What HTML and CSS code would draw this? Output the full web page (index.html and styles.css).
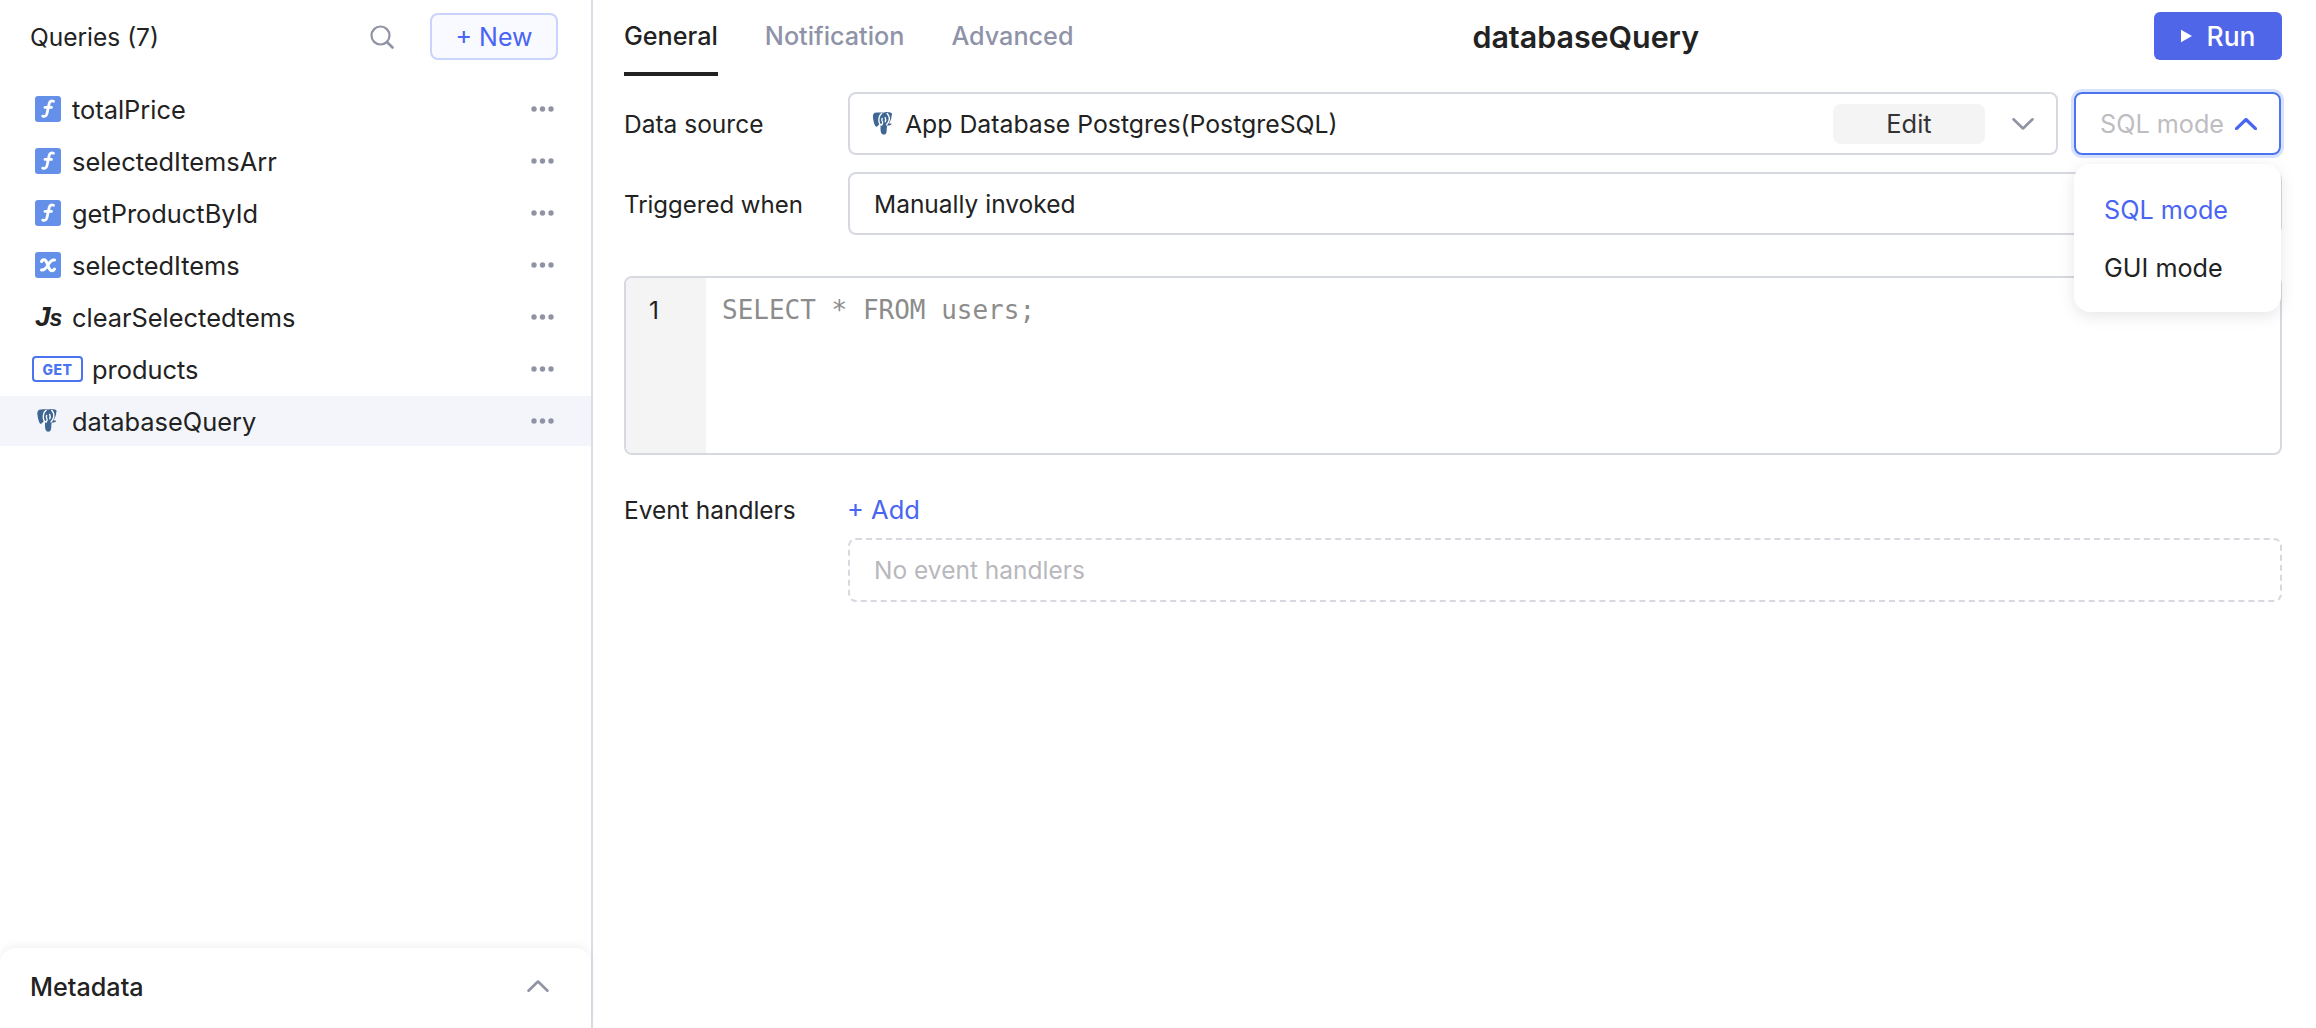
FILE: index.html
```html
<!DOCTYPE html>
<html lang="en">
<head>
<meta charset="utf-8">
<title>databaseQuery</title>
<link rel="stylesheet" href="styles.css">
</head>
<body>
<svg class="defs" width="0" height="0" aria-hidden="true">
  <symbol id="pg" viewBox="0 0 25 28">
    <path fill="#3f6592" d="M5 1.500C2 1.500.7 3.500 1 6.500c.3 3 1.300 8 2.600 9.800.8 1 1.800.8 2.800-.3L8 14.200c.5.3 1 .5 1.500.6-.2 1.500-.3 3-.2 5.500.1 3 1.200 5.200 3.200 5.200 2.400 0 3.300-1.600 3.400-4 .1-2 .2-4 .5-6 1.500.3 3.500 0 4.600-1 .6-.6.3-1-.5-.9-.8 0-1.400 0-2-.4 1.800-3 3-5.800 2.800-8.500C23.100 3 20.500 1.200 17.500 1.300c-1.700-.4-3.400-.2-5 .4C10.800 1.200 8 1.500 5 1.500z"/>
    <path fill="none" stroke="#fff" stroke-width="1.500" stroke-linecap="round" d="M10.500 2.500C8 4.500 7 8.500 7.800 12.500c.3 1.400 1 2.300 2.500 2.500M11 8c-.6 1.500-.4 2.700.4 3.700.7 1-.4 2.500-.9 3.500M16.500 2.500c2.500 2.800 3 6.300 1.300 9.500-.5 1-1.100 1.800-2 2.700M14.300 7c.7 1.500.8 3 .1 4.500"/>
  </symbol>
  <symbol id="dots" viewBox="0 0 23 6">
    <circle cx="3" cy="3" r="2.700"/><circle cx="11.500" cy="3" r="2.700"/><circle cx="20" cy="3" r="2.700"/>
  </symbol>
  <symbol id="chev-up" viewBox="0 0 22 12">
    <path fill="none" stroke="currentColor" stroke-linecap="round" stroke-linejoin="round" d="M1.500 10.700 11 1.500 20.500 10.700"/>
  </symbol>
  <symbol id="chev-down" viewBox="0 0 22 12">
    <path fill="none" stroke="currentColor" stroke-linecap="round" stroke-linejoin="round" d="M1.500 1.300 11 10.500 20.500 1.300"/>
  </symbol>
  <symbol id="fn" viewBox="0 0 26 26">
    <rect width="26" height="26" rx="3" fill="#6490ea"/>
    <path fill="none" stroke="#fff" stroke-width="2.800" stroke-linecap="round" d="M18.500 5.200c-2.300-.8-3.800 0-4.300 2.300l-2.200 10c-.5 2.300-2 3.200-4.300 2.600M10 11.400h6.500"/>
  </symbol>
  <symbol id="var" viewBox="0 0 26 26">
    <rect width="26" height="26" rx="3" fill="#6490ea"/>
    <path fill="none" stroke="#fff" stroke-width="3" stroke-linecap="round" d="M6.500 9.500c1-2 3-2.300 4.300-.8 1.800 2.200 2.500 7.200 4.400 9.200 1.300 1.300 3.300 1 4.300-.9M19.500 8c-3-.5-4.500 1.500-6.500 5-2 3.500-3.500 5.500-6.500 5"/>
  </symbol>
</svg>
<div class="app">
  <aside class="sidebar">
    <header class="side-head">
      <span class="side-title">Queries (7)</span>
      <svg class="search" viewBox="0 0 24 24" aria-hidden="true"><circle cx="10.500" cy="10.500" r="9" fill="none" stroke="#8f93a3" stroke-width="2.200"/><path d="M17 17l5.500 5.500" stroke="#8f93a3" stroke-width="2.600" stroke-linecap="round"/></svg>
      <button class="new-btn">+ New</button>
    </header>
    <ul class="list">
      <li class="row"><svg class="ico"><use href="#fn"/></svg><span class="name">totalPrice</span><svg class="dots"><use href="#dots"/></svg></li>
      <li class="row"><svg class="ico"><use href="#fn"/></svg><span class="name">selectedItemsArr</span><svg class="dots"><use href="#dots"/></svg></li>
      <li class="row"><svg class="ico"><use href="#fn"/></svg><span class="name">getProductById</span><svg class="dots"><use href="#dots"/></svg></li>
      <li class="row"><svg class="ico"><use href="#var"/></svg><span class="name">selectedItems</span><svg class="dots"><use href="#dots"/></svg></li>
      <li class="row"><span class="ico-js">J<span class="ico-js-s">s</span></span><span class="name">clearSelectedtems</span><svg class="dots"><use href="#dots"/></svg></li>
      <li class="row row-get"><span class="ico-get">GET</span><span class="name">products</span><svg class="dots"><use href="#dots"/></svg></li>
      <li class="row row-active"><svg class="ico"><use href="#pg"/></svg><span class="name">databaseQuery</span><svg class="dots"><use href="#dots"/></svg></li>
    </ul>
    <section class="meta">
      <span class="meta-title">Metadata</span>
      <svg class="chev chev-gray"><use href="#chev-up"/></svg>
    </section>
  </aside>
  <main class="main">
    <header class="topbar">
      <nav class="tabs">
        <span class="tab tab-active">General</span>
        <span class="tab">Notification</span>
        <span class="tab">Advanced</span>
      </nav>
      <h1 class="title">databaseQuery</h1>
      <button class="run-btn"><svg class="play" viewBox="0 0 11 14" aria-hidden="true"><path d="M0 0.800 11 7 0 13.200z" fill="#fff"/></svg>Run</button>
    </header>
    <div class="form-row">
      <label class="label">Data source</label>
      <div class="control source">
        <svg class="source-pg"><use href="#pg"/></svg>
        <span class="source-name">App Database Postgres(PostgreSQL)</span>
        <span class="edit">Edit</span>
        <svg class="chev chev-gray"><use href="#chev-down"/></svg>
      </div>
      <div class="mode-wrap">
        <div class="control mode">
          <span class="mode-text">SQL mode</span>
          <svg class="chev chev-blue"><use href="#chev-up"/></svg>
        </div>
        <div class="menu">
          <div class="menu-item menu-on">SQL mode</div>
          <div class="menu-item">GUI mode</div>
        </div>
      </div>
    </div>
    <div class="form-row row-trigger">
      <label class="label label-trigger">Triggered when</label>
      <div class="control trigger">Manually invoked</div>
    </div>
    <div class="editor">
      <div class="gutter">1</div>
      <code class="code">SELECT * FROM users;</code>
    </div>
    <div class="form-row row-events">
      <label class="label label-events">Event handlers</label>
      <div class="events">
        <span class="add">+ Add</span>
        <div class="empty">No event handlers</div>
      </div>
    </div>
  </main>
</div>
</body>
</html>
```

FILE: styles.css
```css
* { box-sizing: border-box; }
html, body { margin: 0; height: 100%; }
body {
  font-family: Inter, "Liberation Sans", sans-serif;
  font-size: 24.5px;
  color: #222222;
  background: #ffffff;
  overflow: hidden;
}
.defs { position: absolute; }
button { font: inherit; cursor: pointer; }

.app { display: flex; height: 1028px; }

.sidebar {
  width: 593px;
  flex: none;
  display: flex;
  flex-direction: column;
  border-right: 2px solid #dadde7;
}
.side-head {
  display: flex;
  align-items: center;
  height: 60px;
  margin-top: 13px;
  padding: 0 33px 13px 30px;
}
.side-title { flex: 1; }
.search { width: 24px; height: 24px; margin-right: 36px; }
.new-btn {
  width: 128px;
  height: 47px;
  border: 2px solid #c9d3fb;
  border-radius: 8px;
  background: #f8faff;
  color: #4965f2;
  font-size: 25px;
  padding: 0;
}

.list {
  list-style: none;
  margin: 11px 0 0;
  padding: 0;
  flex: 1;
  display: flex;
  flex-direction: column;
  gap: 2px;
}
.row {
  display: flex;
  align-items: center;
  height: 50px;
  padding: 0 37px 0 35px;
}
.row-active { background: #f3f5fa; }
.name { flex: 1; margin-left: 11px; font-size: 25.4px; }
.row-get .name { margin-left: 8px; }
.dots { width: 23px; height: 6px; fill: #8f93a3; }

.ico { width: 26px; height: 26px; flex: none; }
.ico-js {
  width: 26px;
  flex: none;
  font-family: "Liberation Sans", sans-serif;
  font-weight: 700;
  font-style: italic;
  font-size: 28px;
  line-height: 1;
  letter-spacing: -1px;
  white-space: nowrap;
  color: #222222;
}
.ico-js-s { font-size: 23px; }
.ico-get {
  width: 51px;
  height: 26px;
  flex: none;
  margin-left: -3px;
  margin-right: 1px;
  border: 2px solid #4a74f0;
  border-radius: 4px;
  color: #4a74f0;
  font-weight: 800;
  font-size: 14px;
  letter-spacing: 0.5px;
  display: flex;
  align-items: center;
  justify-content: center;
}

.meta {
  height: 80px;
  display: flex;
  align-items: center;
  justify-content: space-between;
  padding: 0 42px 4px 30px;
  border-radius: 16px 16px 0 0;
  box-shadow: 0 -3px 8px rgba(0, 0, 0, 0.05);
}
.meta-title { font-weight: 500; font-size: 25.2px; padding-top: 2px; }

.chev { width: 22px; height: 12px; flex: none; stroke-width: 2.6px; }
.chev-gray { color: #8f93a3; }
.chev-blue { color: #4965f2; stroke-width: 3.2px; }

.main {
  flex: 1;
  min-width: 0;
  position: relative;
  padding: 0 34px 0 31px;
}
.topbar {
  display: flex;
  align-items: flex-start;
  height: 76px;
}
.tabs { display: flex; gap: 47px; height: 76px; font-size: 25.2px; }
.tab {
  height: 76px;
  line-height: 73px;
  color: #8f93a8;
  font-weight: 500;
}
.tab-active {
  color: #222222;
  border-bottom: 4px solid #222222;
}
.title {
  flex: 1;
  margin: 0;
  padding-right: 56px;
  text-align: center;
  font-size: 30.4px;
  font-weight: 600;
  line-height: 75px;
}
.run-btn {
  margin-top: 12px;
  width: 128px;
  height: 48px;
  border: 0;
  border-radius: 6px;
  background: #5066e8;
  color: #ffffff;
  font-size: 26.4px;
  font-weight: 500;
  display: flex;
  align-items: center;
  justify-content: center;
  gap: 15px;
  padding: 0;
}
.play { width: 11px; height: 14px; }

.form-row { display: flex; align-items: center; gap: 0; margin-top: 16px; }
.row-trigger { margin-top: 17px; }
.label { width: 224px; flex: none; padding-top: 1px; }
.label-trigger { font-size: 24px; }
.control {
  height: 63px;
  border: 2px solid #d7d9e0;
  border-radius: 8px;
  display: flex;
  align-items: center;
}
.source { width: 1210px; padding: 0 22px; }
.source-pg { width: 23px; height: 26px; flex: none; }
.source-name { flex: 1; margin-left: 10px; font-size: 24.8px; padding-top: 1px; }
.edit {
  width: 152px;
  height: 40px;
  border-radius: 8px;
  background: #f4f4f5;
  color: #333333;
  font-size: 25.4px;
  display: flex;
  align-items: center;
  justify-content: center;
  margin-right: 27px;
}
.mode-wrap { position: relative; margin-left: 16px; }
.mode {
  width: 207px;
  padding: 0 22px 0 24px;
  border-color: #4a74f0;
  box-shadow: 0 0 0 3px #d8e2fc;
}
.mode-text { flex: 1; color: #bdbdc2; font-size: 25.2px; }
.menu {
  position: absolute;
  z-index: 2;
  top: 72px;
  left: 0;
  width: 207px;
  height: 148px;
  padding-top: 17px;
  border-radius: 16px;
  background: #ffffff;
  box-shadow: 0 4px 16px rgba(0, 0, 0, 0.1);
}
.menu-item { height: 58px; line-height: 58px; padding-left: 30px; font-size: 25.2px; }
.menu-on { color: #4965f2; }
.trigger { flex: 1; padding: 1px 25px 0 24px; }

.editor {
  display: flex;
  height: 179px;
  margin-top: 41px;
  border: 2px solid #d7d9e0;
  border-radius: 8px;
  overflow: hidden;
}
.gutter {
  width: 80px;
  flex: none;
  background: #f4f4f5;
  padding: 16px 0 0 23px;
  line-height: 32px;
}
.code {
  padding: 16px 0 0 16px;
  font-family: "DejaVu Sans Mono", "Liberation Mono", monospace;
  font-size: 26px;
  line-height: 32px;
  color: #8c8c8c;
}

.row-events { align-items: flex-start; margin-top: 34px; }
.label-events { line-height: 42px; padding-top: 0; }
.events { flex: 1; }
.add { display: block; line-height: 42px; font-size: 25.5px; color: #4965f2; margin-left: -1px; }
.empty {
  height: 64px;
  margin-top: 7px;
  border: 2px dashed #d7d9e0;
  border-radius: 8px;
  padding-left: 24px;
  line-height: 60px;
  color: #b8b8bd;
}
```
